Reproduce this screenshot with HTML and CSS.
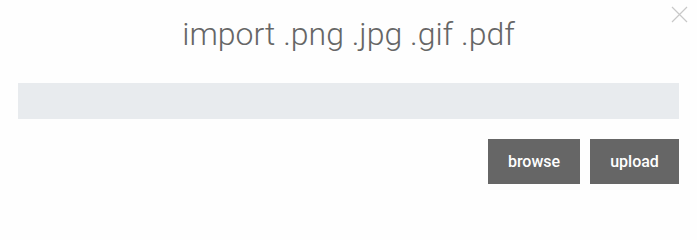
FILE: index.html
```html
<!DOCTYPE html>
<html>
<head>
<meta charset="utf-8">
<link rel="stylesheet" href="styles.css">
</head>
<body>
<div class="dialog">
  <button class="close" aria-label="close">
    <svg width="17" height="17" viewBox="0 0 17 17"><path d="M1 1 L16 16 M16 1 L1 16" stroke="#c8c8c8" stroke-width="1.2" fill="none"/></svg>
  </button>
  <h1 class="title">import .png .jpg .gif .pdf</h1>
  <div class="field"></div>
  <div class="actions">
    <button class="btn">browse</button>
    <button class="btn">upload</button>
  </div>
</div>
</body>
</html>
```
FILE: styles.css
```css
html, body {
  margin: 0;
  padding: 0;
  background: #fefefe;
}
.dialog {
  position: relative;
  width: 697px;
  height: 203px;
  box-sizing: border-box;
  padding: 14px 18px 0 18px;
  font-family: Roboto, "Liberation Sans", sans-serif;
}
.close {
  position: absolute;
  top: 6px;
  right: 9px;
  border: 0;
  background: none;
  padding: 0;
  width: 17px;
  height: 17px;
  display: block;
}
.close svg { display: block; }
.title {
  margin: 0;
  text-align: center;
  font-weight: 300;
  font-size: 32px;
  line-height: 40px;
  color: #666;
}
.field {
  margin-top: 29px;
  height: 36px;
  background: #e8ebee;
}
.actions {
  display: flex;
  justify-content: flex-end;
  gap: 10px;
  margin-top: 20px;
}
.btn {
  border: 0;
  background: #666;
  color: #fff;
  font-family: Roboto, "Liberation Sans", sans-serif;
  font-weight: 500;
  font-size: 16px;
  height: 45px;
  padding: 0;
}
.btn:first-child { width: 92px; }
.btn:last-child { width: 89px; }
```
